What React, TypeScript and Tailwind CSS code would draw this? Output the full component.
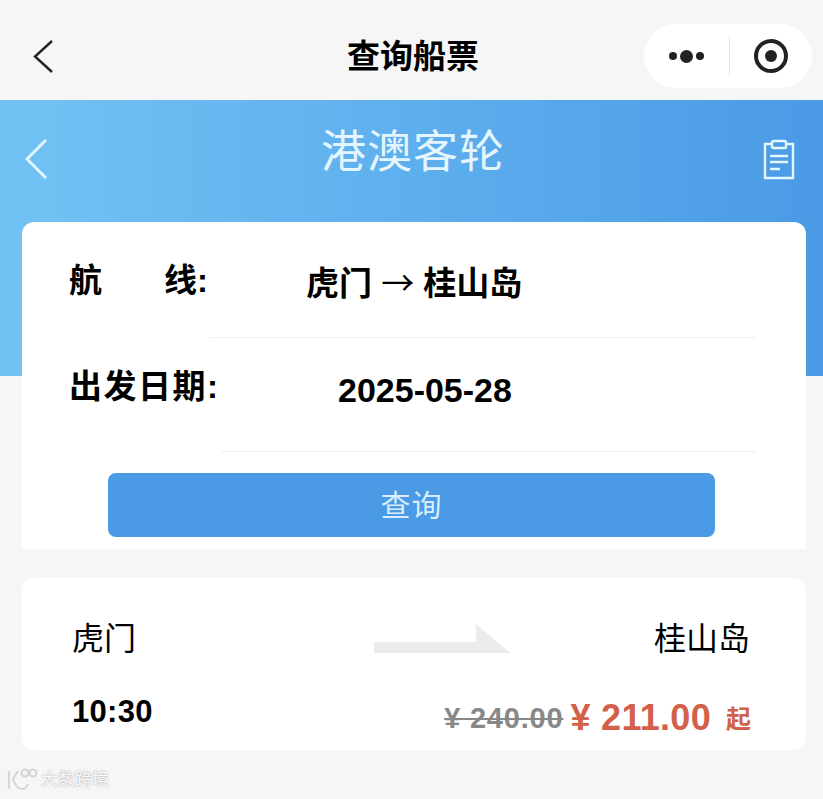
const cjk = "font-['Liberation_Sans','Noto_Sans_CJK_SC',sans-serif]";

function Chevron({ className, width, height, color, stroke }: { className: string; width: number; height: number; color: string; stroke: number }) {
  return (
    <svg width={width} height={height} viewBox={`0 0 ${width} ${height}`} fill="none" stroke={color} strokeWidth={stroke} className={className}>
      <path d={`M${width - 2} 1 L2 ${height / 2} L${width - 2} ${height - 1}`} />
    </svg>
  );
}

function NavBar() {
  return (
    <div className="flex h-[100px] items-center justify-between pl-[33px] pr-[11px]">
      <Chevron width={21} height={33} color="#222" stroke={2.4} className="mt-[12px]" />
      <h1 className="ml-[128px] mt-[12px] text-[33px] font-bold leading-none text-black">查询船票</h1>
      <div className="mt-[12px] flex h-[64px] w-[168px] items-center rounded-full bg-white">
        <div className="flex w-[85px] items-center justify-center gap-[3px]">
          <span className="h-[8px] w-[8px] rounded-full bg-[#222]" />
          <span className="h-[13px] w-[13px] rounded-full bg-[#222]" />
          <span className="h-[8px] w-[8px] rounded-full bg-[#222]" />
        </div>
        <div className="h-[40px] w-px bg-[#e5e5e5]" />
        <div className="flex flex-1 items-center justify-center">
          <div className="flex h-[34px] w-[34px] items-center justify-center rounded-full border-[4px] border-[#222]">
            <span className="h-[12px] w-[12px] rounded-full bg-[#222]" />
          </div>
        </div>
      </div>
    </div>
  );
}

function Hero() {
  return (
    <div className="h-[276px] bg-gradient-to-r from-[#72c3f4] to-[#4a9ae6]">
      <div className="flex items-start justify-between pl-[25px] pr-[27px] pt-[27px]">
        <Chevron width={23} height={40} color="#e3f5fd" stroke={3} className="mt-[12px]" />
        <h2 className="ml-[16px] text-[45px] leading-[52px] tracking-[1px] text-[#e3f5fd]">港澳客轮</h2>
        <svg width="34" height="42" viewBox="0 0 34 42" fill="none" stroke="#e3f5fd" strokeWidth="2.4" className="mt-[12px]">
          <path d="M10 5H3v34h28V5h-7" />
          <rect x="10" y="2" width="14" height="7" rx="1.5" />
          <path d="M8 17h18M8 23h18M8 30h10" />
        </svg>
      </div>
    </div>
  );
}

function SearchCard() {
  return (
    <div className="ml-[22px] mr-[17px] -mt-[154px] h-[327px] rounded-t-[12px] bg-white">
      <div className="relative flex h-[116px] pl-[47px] pt-[41px]">
        <span className="flex w-[139px] justify-between text-[33px] font-bold leading-[36px] text-black">
          <span>航</span>
          <span>线:</span>
        </span>
        <span className="ml-[98px] text-[33px] font-bold leading-[36px] text-black">
          虎门 <span className="font-['Noto_Sans_CJK_SC'] font-normal">→</span> 桂山岛
        </span>
        <div className="absolute bottom-0 left-[188px] right-[51px] h-px bg-[#efefef]" />
      </div>
      <div className="relative flex h-[114px] pl-[47px] pt-[29px]">
        <span className="text-[33px] font-bold leading-[40px] tracking-[1.5px] text-black">出发日期:</span>
        <span className="absolute left-[316px] top-[32px] text-[34px] font-bold leading-[40px] text-black">2025-05-28</span>
        <div className="absolute bottom-0 left-[199px] right-[50px] h-px bg-[#efefef]" />
      </div>
      <div className="ml-[86px] mr-[91px] mt-[21px] flex h-[64px] items-center justify-center rounded-[8px] bg-[#4a9ae6] text-[30px] tracking-[1px] text-[#d9eefb]">
        查询
      </div>
    </div>
  );
}

function TicketCard() {
  return (
    <div className="ml-[22px] mr-[17px] mt-[29px] h-[172px] rounded-[12px] bg-white pl-[50px] pr-[56px]">
      <div className="flex h-[108px] items-start justify-between pt-[43px]">
        <span className="text-[32px] leading-[36px] text-black">虎门</span>
        <svg width="136" height="30" viewBox="0 0 136 30" className="ml-[93px] mt-[3px]">
          <path d="M0 18h102V0l34 29H0z" fill="#ececec" />
        </svg>
        <span className="text-[32px] leading-[36px] text-black">桂山岛</span>
      </div>
      <div className="flex items-start justify-between">
        <span className="mt-[8px] text-[31px] font-bold leading-[36px] tracking-[0.3px] text-black">10:30</span>
        <div className="mr-[-1px] mt-[12px] flex items-center">
          <span className="text-[29px] font-bold leading-[36px] tracking-[0.8px] text-[#888] line-through">¥ 240.00</span>
          <span className="ml-[7px] text-[36px] font-bold leading-[36px] tracking-[0.3px] text-[#d2604a]">¥ 211.00</span>
          <span className="ml-[15px] mt-[3px] text-[25px] font-bold leading-[36px] text-[#d2604a]">起</span>
        </div>
      </div>
    </div>
  );
}

function Watermark() {
  return (
    <div className="mt-[17px] flex items-center pl-[6px]">
      <svg width="34" height="26" viewBox="0 0 34 26" fill="none" stroke="#d6d6d6" strokeWidth="2.2">
        <path d="M3 4v18M12 4 7 12c2 6 5 10 9 10 3 0 5-2 6-5" />
        <circle cx="19" cy="6" r="3.5" />
        <circle cx="27" cy="6" r="3.5" />
      </svg>
      <span className="ml-[1px] text-[17px] leading-[24px] text-[#fafafa] [text-shadow:0_0_2px_#999]">大数跨境</span>
    </div>
  );
}

export default function App() {
  return (
    <div className={`h-[799px] w-[823px] overflow-hidden bg-[#f6f6f6] ${cjk}`}>
      <NavBar />
      <Hero />
      <SearchCard />
      <TicketCard />
      <Watermark />
    </div>
  );
}
